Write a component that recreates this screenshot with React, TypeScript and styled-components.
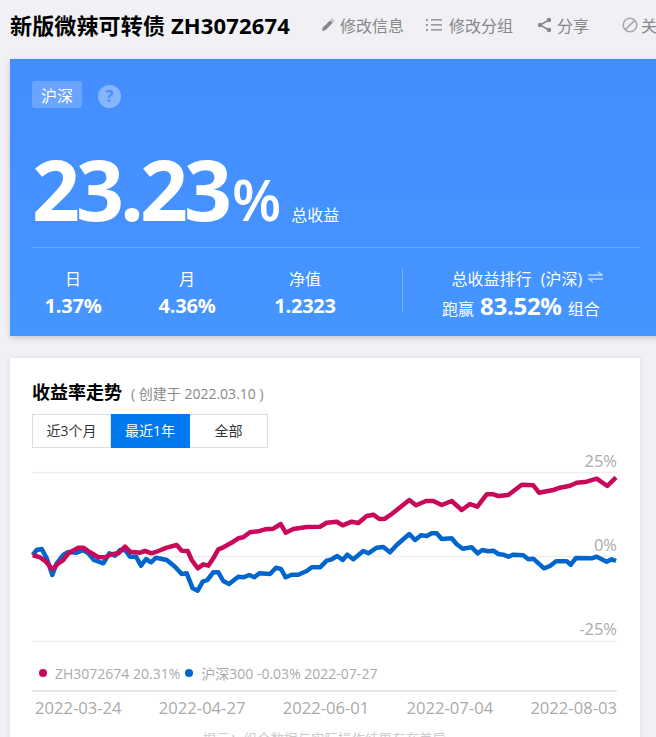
import React from 'react';
import styled, { createGlobalStyle } from 'styled-components';

const FONT = '"Open Sans", "Noto Sans CJK SC", sans-serif';

const GlobalStyle = createGlobalStyle`
  html, body {
    margin: 0;
    padding: 0;
    background: #f0f0f5;
    overflow: hidden;
  }
  body {
    font-family: ${FONT};
  }
`;

const Page = styled.div`
  width: 656px;
  height: 737px;
  overflow: hidden;
  background: #f0f0f5;
`;

const Header = styled.div`
  display: flex;
  align-items: center;
  height: 50px;
  padding-left: 10px;
  white-space: nowrap;
`;

const Title = styled.h1`
  margin: 0 31px 0 0;
  font-size: 22px;
  line-height: 50px;
  font-weight: 700;
  color: #000;
  letter-spacing: 0.15px;
`;

const Action = styled.a<{ $gap: number; $iconGap?: number }>`
  display: flex;
  align-items: center;
  gap: ${(p) => p.$iconGap ?? 5}px;
  margin-right: ${(p) => p.$gap}px;
  font-size: 16px;
  color: #888;
  flex-shrink: 0;
`;

const Hero = styled.section`
  box-sizing: border-box;
  width: 660px;
  height: 277px;
  margin: 9px 0 0 10px;
  padding: 22px 0 0 22px;
  background: linear-gradient(180deg, #448dff, #4595ff);
  box-shadow: 0 2px 6px rgba(0, 0, 0, 0.16);
  color: #fff;
`;

const TagRow = styled.div`
  display: flex;
  align-items: center;
  gap: 16px;
`;

const Tag = styled.span`
  width: 50px;
  height: 27px;
  line-height: 30px;
  text-align: center;
  font-size: 16px;
  background: rgba(255, 255, 255, 0.2);
  border-radius: 3px;
`;

const Help = styled.span`
  width: 23px;
  height: 23px;
  margin-top: 3px;
  border-radius: 50%;
  background: rgba(255, 255, 255, 0.35);
  color: #448dff;
  font-size: 16px;
  font-weight: 700;
  line-height: 23px;
  text-align: center;
`;

const Total = styled.div`
  display: flex;
  align-items: baseline;
  height: 116px;
  margin-top: 23px;
`;

const TotalValue = styled.span`
  font-size: 84px;
  line-height: 116px;
  font-weight: 700;
  letter-spacing: -4px;
`;

const TotalPercent = styled.span`
  font-size: 57px;
  font-weight: 600;
  margin-left: 4px;
`;

const TotalLabel = styled.span`
  font-size: 16px;
  margin-left: 10px;
`;

const Stats = styled.div`
  display: flex;
  align-items: center;
  width: 608px;
  height: 83px;
  border-top: 1px solid rgba(255, 255, 255, 0.22);
`;

const StatGrid = styled.div`
  display: grid;
  grid-template-columns: 82px 146px 90px;
  width: 371px;
  height: 44px;
  border-right: 1px solid rgba(255, 255, 255, 0.25);
`;

const Stat = styled.div`
  text-align: center;
`;

const StatLabel = styled.div`
  font-size: 16px;
  line-height: 22px;
`;

const StatValue = styled.div`
  font-size: 20px;
  line-height: 32px;
  font-weight: 700;
  letter-spacing: -0.2px;
`;

const Rank = styled.div`
  width: 238px;
  height: 44px;
  text-align: center;
`;

const RankTitle = styled.div`
  display: flex;
  justify-content: center;
  align-items: center;
  gap: 6px;
  font-size: 16px;
  line-height: 22px;
  padding-left: 12px;
  word-spacing: 5px;
`;

const RankSwap = styled.span`
  display: block;
  margin-top: -3px;
`;

const RankValue = styled.div`
  display: flex;
  justify-content: center;
  align-items: baseline;
  gap: 6px;
  font-size: 16px;
  line-height: 32px;
  padding-right: 1px;
`;

const RankNumber = styled.strong`
  font-size: 24px;
  font-weight: 700;
  letter-spacing: -0.3px;
`;

const Card = styled.section`
  box-sizing: border-box;
  width: 630px;
  height: 420px;
  margin: 22px 0 0 10px;
  padding: 20px 23px 0 22px;
  background: #fff;
  box-shadow: 0 0 5px rgba(0, 0, 0, 0.1);
`;

const CardHead = styled.div`
  display: flex;
  align-items: baseline;
  gap: 9px;
  height: 28px;
  line-height: 28px;
`;

const CardTitle = styled.h2`
  margin: 0;
  font-size: 18px;
  font-weight: 700;
  color: #000;
`;

const Created = styled.span`
  font-size: 14px;
  color: #888;
`;

const RangeTabs = styled.div`
  display: grid;
  grid-template-columns: 79px 79px 78px;
  margin-top: 8px;
  width: 236px;
`;

const RangeTab = styled.div<{ $active?: boolean }>`
  box-sizing: border-box;
  height: 34px;
  line-height: 32px;
  text-align: center;
  font-size: 14px;
  color: ${(p) => (p.$active ? '#fff' : '#333')};
  background: ${(p) => (p.$active ? '#0078ee' : '#fff')};
  border: 1px solid ${(p) => (p.$active ? '#0078ee' : '#ddd')};
  &:not(:first-child) {
    border-left: none;
  }
`;

const Chart = styled.svg`
  display: block;
  margin-top: 2px;
  width: 585px;
  height: 195px;
  overflow: visible;
`;

const AxisLabel = styled.text`
  font-family: ${FONT};
  font-size: 16.5px;
  fill: #aaa;
  text-anchor: end;
`;

const Legend = styled.div`
  box-sizing: border-box;
  display: flex;
  align-items: center;
  height: 46px;
  padding: 12px 0 0 7px;
  margin-top: -1px;
  font-size: 14px;
  color: #aaa;
  white-space: nowrap;
`;

const Dot = styled.i<{ $color: string }>`
  width: 8px;
  height: 8px;
  border-radius: 50%;
  background: ${(p) => p.$color};
  margin-right: 8px;
  flex-shrink: 0;
`;

const LegendItem = styled.span`
  margin-right: 5px;
`;

const XAxis = styled.div`
  display: flex;
  justify-content: space-between;
  border-top: 2px solid #e6e6e6;
  padding: 3px 0 0 3px;
  font-size: 16.6px;
  line-height: 26px;
  color: #aaa;
`;

const Hint = styled.div`
  margin-top: 7px;
  text-align: center;
  font-size: 13.5px;
  color: #ccc;
`;

const IconSvg = styled.svg`
  flex-shrink: 0;
  display: block;
`;

const redPoints =
  '32.7,555 40,557.3 46,561.7 52.3,569.3 58.3,563.3 63.3,560 68.3,553.3 78.3,547.7 83.3,547.7 90,552.3 98.3,557.3 105,557.3 111.7,554.3 118.3,553.3 125,546.7 130,551.7 140,552.7 145,551 151.7,553.3 158.3,551 166.7,547.7 176.7,545 181.7,550.7 187.7,551 191.7,560 197.7,568.3 203.3,564.3 208.3,565.7 213.3,558.3 218.3,549.3 223.3,547.3 233.3,541.7 238.3,538.3 243.3,537.3 250,532.3 258.3,531.3 265,529.3 273.3,528.7 280.7,524 285.7,532.7 293.3,529 306.7,527 320,526.7 326.7,522.7 336.7,521.7 342.7,525.3 351.7,521.7 358.3,523 366.7,516 373.3,514.7 379.3,519 385,518.7 391.7,514 409.3,500 416,505.3 426,501 433.3,501 441.7,505 451.7,501 461.7,510 470,504 477.3,506.7 486.7,494.3 493.3,494.3 498.3,496 508.3,495 521.7,484.7 533.3,485.3 539,492.7 553.3,490 560,487.7 570,485.7 576.7,482.7 586.7,481.7 596.7,478.7 607.3,486 616,477.3';

const bluePoints =
  '32.7,555 36.7,550 41.7,549 46.7,558.3 52.3,575 56.7,563.3 63.3,555 68.3,552 76.7,552.7 83.3,550 88.3,553.3 94,560 103.3,563.3 109.3,553.3 115,555.7 120,550 125,550 130,556.7 136,556.7 141,565.7 146,559 151,562.3 156,557.7 166.7,560 175,566.7 181.7,574 186.7,573.3 192.7,588.3 197.7,590.7 202.7,581.7 207.3,580 213.3,572.3 218.3,572.3 223.3,581 229,584 238.3,576.7 243.3,577.3 249.3,575 254.3,577.3 259.3,573.3 270,574 276,567.7 281,569 285.7,577.3 291.7,574.7 298.3,574.7 306.7,571 311.7,567.3 320,567.3 326.7,560.7 331.7,559.3 337.3,556 342.7,560 347.3,554.7 353.3,559.3 363.3,551 368.3,553.3 376.7,547.7 383.3,547 390,552.3 396.7,545 409.3,534 415,540 421,535.3 426.7,536 431.7,533.3 436.7,533.3 441.7,539 451.7,538.3 456.7,544.3 462.7,548.7 471.7,547.3 477.7,553.3 482.3,550 488.3,551.3 493.3,550.7 498.3,554 503.3,554.7 508.3,556.7 513.3,554.7 523.3,555.3 528.3,559.3 533.3,558.7 544,568.3 550,566 556,561.3 566.7,561.3 570.7,564.7 576,558 591.7,558.3 596.7,556.7 606.7,561.7 611.7,559.3 616,561';

const gridLines = [472.5, 556.5, 641.5];
const yLabels = [
  { text: '25%', y: 467 },
  { text: '0%', y: 551 },
  { text: '-25%', y: 635 },
];
const ranges = ['近3个月', '最近1年', '全部'];
const dates = ['2022-03-24', '2022-04-27', '2022-06-01', '2022-07-04', '2022-08-03'];

const PenIcon = () => (
  <IconSvg width="14" height="14" viewBox="0 0 14 14">
    <path d="M1 13l.8-3.4 7.4-7.4 2.6 2.6-7.4 7.4z" fill="#888" />
    <path d="M9.9 1.5l.9-.9 2.6 2.6-.9.9z" fill="#aaa" />
  </IconSvg>
);

const ListIcon = () => (
  <IconSvg width="16" height="14" viewBox="0 0 16 14" fill="#999">
    <rect x="0" y="1" width="2" height="2" />
    <rect x="0" y="6" width="2" height="2" />
    <rect x="0" y="11" width="2" height="2" />
    <rect x="5" y="1" width="11" height="1.6" />
    <rect x="5" y="6" width="11" height="1.6" />
    <rect x="5" y="11" width="11" height="1.6" />
  </IconSvg>
);

const ShareIcon = () => (
  <IconSvg width="15" height="16" viewBox="0 0 15 16">
    <path d="M12 3L3 8l9 5" fill="none" stroke="#888" strokeWidth="1.5" />
    <circle cx="12" cy="3" r="2.2" fill="#888" />
    <circle cx="3" cy="8" r="2.2" fill="#888" />
    <circle cx="12" cy="13" r="2.2" fill="#888" />
  </IconSvg>
);

const BanIcon = () => (
  <IconSvg width="16" height="16" viewBox="0 0 16 16" fill="none" stroke="#aaa" strokeWidth="1.6">
    <circle cx="8" cy="8" r="6.8" />
    <path d="M3.4 12.6L12.6 3.4" />
  </IconSvg>
);

const SwapIcon = () => (
  <IconSvg width="15" height="12" viewBox="0 0 15 12" fill="none" stroke="rgba(255,255,255,0.65)" strokeWidth="1.3">
    <path d="M0 4h14L10 .8" />
    <path d="M15 8H1l4 3.2" />
  </IconSvg>
);

export default function App() {
  return (
    <Page>
      <GlobalStyle />
      <Header>
        <Title>新版微辣可转债 ZH3072674</Title>
        <Action $gap={22}>
          <PenIcon />
          修改信息
        </Action>
        <Action $gap={24} $iconGap={7}>
          <ListIcon />
          修改分组
        </Action>
        <Action $gap={33}>
          <ShareIcon />
          分享
        </Action>
        <Action $gap={0} $iconGap={3}>
          <BanIcon />
          关闭
        </Action>
      </Header>

      <Hero>
        <TagRow>
          <Tag>沪深</Tag>
          <Help>?</Help>
        </TagRow>
        <Total>
          <TotalValue>23.23</TotalValue>
          <TotalPercent>%</TotalPercent>
          <TotalLabel>总收益</TotalLabel>
        </Total>
        <Stats>
          <StatGrid>
            <Stat>
              <StatLabel>日</StatLabel>
              <StatValue>1.37%</StatValue>
            </Stat>
            <Stat>
              <StatLabel>月</StatLabel>
              <StatValue>4.36%</StatValue>
            </Stat>
            <Stat>
              <StatLabel>净值</StatLabel>
              <StatValue>1.2323</StatValue>
            </Stat>
          </StatGrid>
          <Rank>
            <RankTitle>
              总收益排行 (沪深)
              <RankSwap>
                <SwapIcon />
              </RankSwap>
            </RankTitle>
            <RankValue>
              跑赢
              <RankNumber>83.52%</RankNumber>
              组合
            </RankValue>
          </Rank>
        </Stats>
      </Hero>

      <Card>
        <CardHead>
          <CardTitle>收益率走势</CardTitle>
          <Created>( 创建于 2022.03.10 )</Created>
        </CardHead>
        <RangeTabs>
          {ranges.map((r) => (
            <RangeTab key={r} $active={r === '最近1年'}>
              {r}
            </RangeTab>
          ))}
        </RangeTabs>
        <Chart viewBox="32 450 585 195">
          {gridLines.map((y) => (
            <line key={y} x1="32" x2="617" y1={y} y2={y} stroke="#eee" strokeWidth="1.5" />
          ))}
          {yLabels.map((l) => (
            <AxisLabel key={l.text} x="617" y={l.y}>
              {l.text}
            </AxisLabel>
          ))}
          <polyline points={bluePoints} fill="none" stroke="#0066cc" strokeWidth="4.5" strokeLinejoin="round" />
          <polyline points={redPoints} fill="none" stroke="#c9085a" strokeWidth="4.5" strokeLinejoin="round" />
        </Chart>
        <Legend>
          <Dot $color="#c9085a" />
          <LegendItem>ZH3072674 20.31%</LegendItem>
          <Dot $color="#0066cc" />
          <span>沪深300 -0.03% 2022-07-27</span>
        </Legend>
        <XAxis>
          {dates.map((d) => (
            <span key={d}>{d}</span>
          ))}
        </XAxis>
        <Hint>提示：组合数据与实际操作结果存在差异</Hint>
      </Card>
    </Page>
  );
}
